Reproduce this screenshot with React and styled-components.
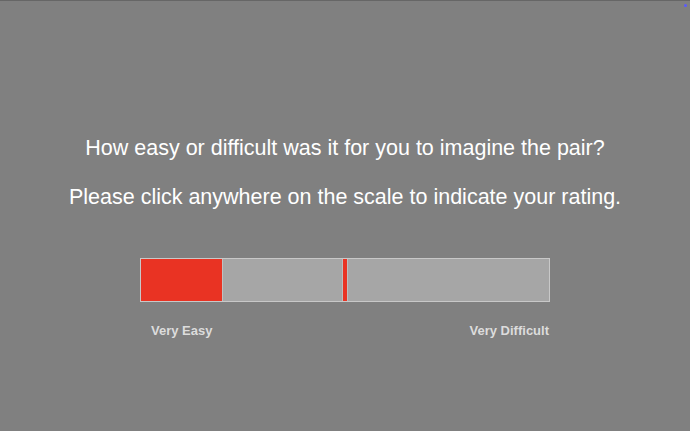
import styled, { createGlobalStyle } from "styled-components";

const GlobalStyle = createGlobalStyle`
  html, body {
    margin: 0;
    padding: 0;
    background: #808080;
  }
  body {
    font-family: "Liberation Sans", Arial, sans-serif;
  }
`;

const Screen = styled.div`
  position: relative;
  width: 690px;
  height: 431px;
  box-sizing: border-box;
  border-top: 1px solid #666666;
  display: flex;
  flex-direction: column;
  align-items: center;
  padding-top: 134px;
  color: #ffffff;
`;

const Dot = styled.span`
  position: absolute;
  top: 3px;
  right: 3px;
  width: 3px;
  height: 3px;
  border-radius: 50%;
  background: #5a5aff;
`;

const Prompt = styled.p`
  margin: 0 0 ${(p) => p.$gap}px;
  font-size: 21.5px;
  line-height: 26px;
  text-align: center;
`;

const Scale = styled.div`
  width: 410px;
  margin-top: 48px;
`;

const Track = styled.div`
  position: relative;
  height: 44px;
  box-sizing: border-box;
  border: 1px solid #c8c8c8;
  background: #a6a6a6;
  cursor: pointer;
`;

const Fill = styled.div`
  height: 100%;
  background: #e93323;
  border-right: 1px solid #c0c0c0;
  box-sizing: border-box;
`;

const Marker = styled.div`
  position: absolute;
  top: 0;
  bottom: 0;
  width: 4px;
  transform: translateX(-50%);
  background: #e93323;
  box-shadow: 1px 0 0 #bdbdbd, -1px 0 0 #bdbdbd;
`;

const Labels = styled.div`
  display: flex;
  justify-content: space-between;
  padding: 0 1px 0 11px;
  margin-top: 21px;
`;

const Label = styled.span`
  font-size: 13px;
  font-weight: bold;
  color: #dcdcdc;
`;

const App = () => {
  const rating = 20;
  const marker = 50;

  return (
    <>
      <GlobalStyle />
      <Screen>
        <Dot />
        <Prompt $gap={23}>How easy or difficult was it for you to imagine the pair?</Prompt>
        <Prompt $gap={0}>Please click anywhere on the scale to indicate your rating.</Prompt>
        <Scale>
          <Track>
            <Fill style={{ width: `${rating}%` }} />
            <Marker style={{ left: `${marker}%` }} />
          </Track>
          <Labels>
            <Label>Very Easy</Label>
            <Label>Very Difficult</Label>
          </Labels>
        </Scale>
      </Screen>
    </>
  );
};

export default App;
